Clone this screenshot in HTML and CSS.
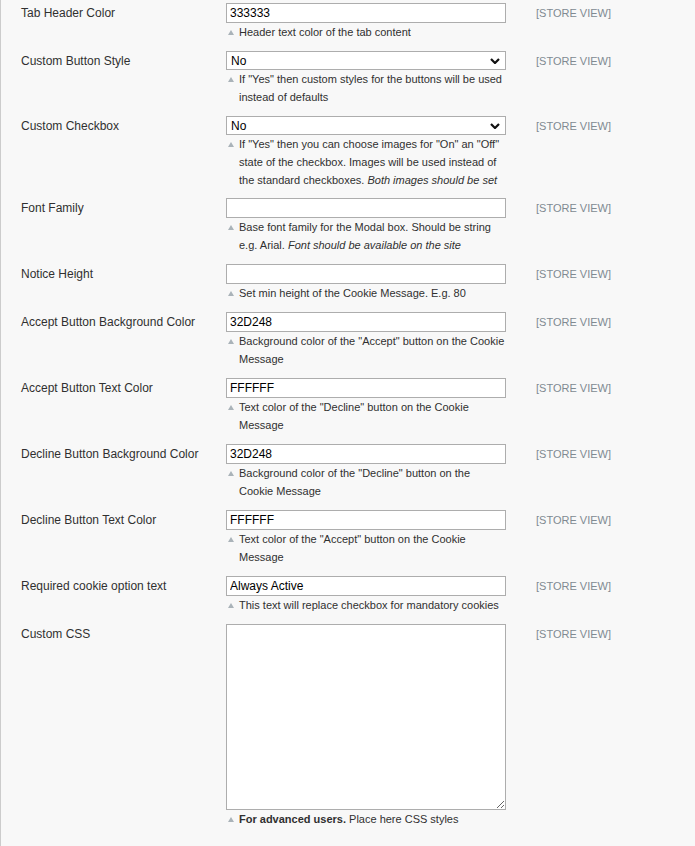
FILE: index.html
```html
<!DOCTYPE html>
<html>
<head>
<meta charset="utf-8">
<link rel="stylesheet" href="styles.css">
</head>
<body>
<div class="page">
  <div class="row">
    <div class="label">Tab Header Color</div>
    <div class="value">
      <input class="text" type="text" value="333333">
      <div class="note"><span class="mark"></span><span class="ntext">Header text color of the tab content</span></div>
    </div>
    <div class="scope">[STORE VIEW]</div>
  </div>

  <div class="row sel">
    <div class="label">Custom Button Style</div>
    <div class="value">
      <div class="select"><span>No</span><svg class="chev" viewBox="0 0 10 6" width="10" height="6"><path d="M1 1 L5 5 L9 1" fill="none" stroke="#111" stroke-width="2.2"/></svg></div>
      <div class="note"><span class="mark"></span><span class="ntext">If "Yes" then custom styles for the buttons will be used instead of defaults</span></div>
    </div>
    <div class="scope">[STORE VIEW]</div>
  </div>

  <div class="row sel">
    <div class="label">Custom Checkbox</div>
    <div class="value">
      <div class="select"><span>No</span><svg class="chev" viewBox="0 0 10 6" width="10" height="6"><path d="M1 1 L5 5 L9 1" fill="none" stroke="#111" stroke-width="2.2"/></svg></div>
      <div class="note"><span class="mark"></span><span class="ntext">If "Yes" then you can choose images for "On" an "Off" state of the checkbox. Images will be used instead of the standard checkboxes. <em>Both images should be set</em></span></div>
    </div>
    <div class="scope">[STORE VIEW]</div>
  </div>

  <div class="row">
    <div class="label">Font Family</div>
    <div class="value">
      <input class="text" type="text" value="">
      <div class="note"><span class="mark"></span><span class="ntext">Base font family for the Modal box. Should be string e.g. Arial. <em>Font should be available on the site</em></span></div>
    </div>
    <div class="scope">[STORE VIEW]</div>
  </div>

  <div class="row">
    <div class="label">Notice Height</div>
    <div class="value">
      <input class="text" type="text" value="">
      <div class="note"><span class="mark"></span><span class="ntext">Set min height of the Cookie Message. E.g. 80</span></div>
    </div>
    <div class="scope">[STORE VIEW]</div>
  </div>

  <div class="row">
    <div class="label">Accept Button Background Color</div>
    <div class="value">
      <input class="text" type="text" value="32D248">
      <div class="note"><span class="mark"></span><span class="ntext">Background color of the "Accept" button on the Cookie Message</span></div>
    </div>
    <div class="scope">[STORE VIEW]</div>
  </div>

  <div class="row">
    <div class="label">Accept Button Text Color</div>
    <div class="value">
      <input class="text" type="text" value="FFFFFF">
      <div class="note"><span class="mark"></span><span class="ntext">Text color of the "Decline" button on the Cookie Message</span></div>
    </div>
    <div class="scope">[STORE VIEW]</div>
  </div>

  <div class="row">
    <div class="label">Decline Button Background Color</div>
    <div class="value">
      <input class="text" type="text" value="32D248">
      <div class="note"><span class="mark"></span><span class="ntext">Background color of the "Decline" button on the Cookie Message</span></div>
    </div>
    <div class="scope">[STORE VIEW]</div>
  </div>

  <div class="row">
    <div class="label">Decline Button Text Color</div>
    <div class="value">
      <input class="text" type="text" value="FFFFFF">
      <div class="note"><span class="mark"></span><span class="ntext">Text color of the "Accept" button on the Cookie Message</span></div>
    </div>
    <div class="scope">[STORE VIEW]</div>
  </div>

  <div class="row">
    <div class="label">Required cookie option text</div>
    <div class="value">
      <input class="text" type="text" value="Always Active">
      <div class="note"><span class="mark"></span><span class="ntext">This text will replace checkbox for mandatory cookies</span></div>
    </div>
    <div class="scope">[STORE VIEW]</div>
  </div>

  <div class="row">
    <div class="label">Custom CSS</div>
    <div class="value">
      <textarea class="area"></textarea>
      <div class="note"><span class="mark"></span><span class="ntext"><strong>For advanced users.</strong> Place here CSS styles</span></div>
    </div>
    <div class="scope">[STORE VIEW]</div>
  </div>
</div>
</body>
</html>
```
FILE: styles.css
```css
html, body {
  margin: 0;
  padding: 0;
  background: #f8f8f8;
}
body {
  font-family: "Liberation Sans", Arial, sans-serif;
  color: #303030;
}
.page {
  min-height: 846px;
  box-sizing: border-box;
  border-left: 1px solid #cccccc;
  padding: 3px 0 0 20px;
}
.row {
  display: grid;
  grid-template-columns: 205px 280px auto;
  padding-bottom: 10px;
  align-items: start;
}
.row:nth-child(3) {
  padding-bottom: 9px;
}
.label {
  font-size: 12px;
  line-height: 20px;
  color: #303030;
}
.sel .label, .sel .scope {
  line-height: 20px;
}
.value {
  display: flex;
  flex-direction: column;
}
.text {
  box-sizing: border-box;
  width: 280px;
  height: 20px;
  margin: 0;
  border: 1px solid #adadad;
  background: #fff;
  padding: 0 3px;
  font-family: "Liberation Sans", Arial, sans-serif;
  font-size: 12px;
  color: #000;
  outline: none;
}
.select {
  box-sizing: border-box;
  width: 280px;
  height: 19px;
  border: 1px solid #adadad;
  background: #fff;
  display: flex;
  align-items: center;
  justify-content: space-between;
  padding: 0 5px 0 4px;
  font-size: 12px;
  color: #000;
}
.chev {
  display: block;
}
.area {
  box-sizing: border-box;
  width: 280px;
  height: 186px;
  margin: 0;
  border: 1px solid #adadad;
  background: #fff;
  font-family: "Liberation Sans", Arial, sans-serif;
  font-size: 12px;
  outline: none;
  display: block;
}
.note {
  display: flex;
  margin-top: 0;
  font-size: 11px;
  line-height: 18px;
  color: #303030;
}
.mark {
  flex: 0 0 13px;
  height: 18px;
}
.mark::before {
  content: "";
  display: block;
  margin: 7px 0 0 2px;
  width: 0;
  height: 0;
  border-left: 3px solid transparent;
  border-right: 3px solid transparent;
  border-bottom: 5px solid #aab3b9;
}
.ntext em {
  font-style: italic;
}
.ntext strong {
  font-weight: bold;
}
.scope {
  margin-left: 30px;
  font-size: 11px;
  line-height: 20px;
  color: #808a92;
  text-transform: uppercase;
}
```
